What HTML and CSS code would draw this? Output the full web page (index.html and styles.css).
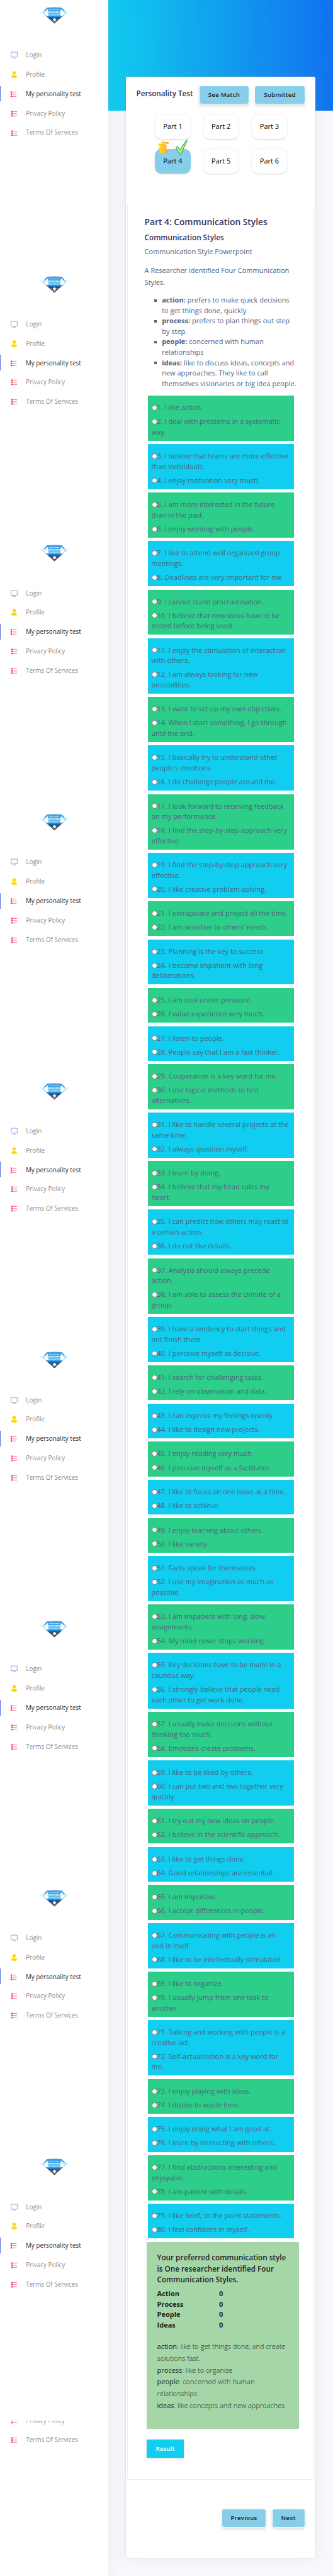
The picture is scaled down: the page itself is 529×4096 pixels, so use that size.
FILE: index.html
```html
<!DOCTYPE html>
<html lang="en">
<head>
<meta charset="utf-8">
<title>Personality Test</title>
<link rel="stylesheet" href="styles.css">
</head>
<body>
<svg class="defs" aria-hidden="true">
  <defs>
    <linearGradient id="gem-fill" x1="0" y1="0" x2="0" y2="1">
      <stop offset="0" stop-color="#4a9ad8"/><stop offset=".28" stop-color="#3fa9ee"/>
      <stop offset=".45" stop-color="#6fd0fa"/><stop offset=".58" stop-color="#1f86cf"/>
      <stop offset=".7" stop-color="#1d3f7c"/><stop offset=".85" stop-color="#5b5a68"/>
      <stop offset="1" stop-color="#3d5a40"/>
    </linearGradient>
    <linearGradient id="coin-fill" x1="0" y1="0" x2="1" y2="0">
      <stop offset="0" stop-color="#fbdc1c"/><stop offset="1" stop-color="#f9ab2e"/>
    </linearGradient>
    <symbol id="gem" viewBox="0 0 68 39">
      <path d="M17 1.5Q34 0 51 1.5L62 13.500 34 38.500 6 13.500Z" fill="url(#gem-fill)"/>
      <path d="M8.500 13.500 18.500 5.500 19.500 10.500 20.500 20.500 15 20.500Z" fill="#fff"/>
      <path d="M59.500 13.500 49.500 5.500 48 10.500 47.500 20.500 53 20.500Z" fill="#fff"/>
      <path d="M22 6.500h24M24 19h21" stroke="#e6f6ff" stroke-width="1.200" stroke-dasharray="2 1" fill="none"/>
      <path d="M1 11.800h66" stroke="#d5effa" stroke-width="3" stroke-dasharray="2.200 .8"/>
      <path d="M22 28.500h9M38 28.500h8M27 32.500h5M37 32.500h4" stroke="#d9b39b" stroke-width="1.200" stroke-dasharray="1 1"/>
      <path d="M30.500 29.500Q34 22.500 38 29.500L34.500 34Z" fill="#fff"/>
      <circle cx="34.300" cy="36" r="2" fill="#243b2b"/><circle cx="34.300" cy="35.600" r=".8" fill="#d8e8d8"/>
    </symbol>
    <symbol id="tv" viewBox="0 0 16 16">
      <path d="M1 1.500h14v11H1z" fill="none" stroke="#5e72e4" stroke-width="1"/>
      <path d="M4.500 14.700h7" stroke="#5e72e4" stroke-width="1"/>
    </symbol>
    <symbol id="user" viewBox="0 0 16 16">
      <circle cx="8" cy="4.300" r="3.900" fill="#ffd600"/>
      <path d="M1.500 13Q2 9.300 5.200 9.200Q8 10.800 10.800 9.200Q14 9.300 14.500 13Q14.500 15.500 12.500 15.500H3.500Q1.500 15.500 1.500 13Z" fill="#ffd600"/>
    </symbol>
    <symbol id="list" viewBox="0 0 16 16">
      <path d="M3 3.500h12M3 8.500h12M3 13.500h12" stroke="#f5365c" stroke-width="1"/>
      <path d="M3 3v11" stroke="#f5365c" stroke-width=".5"/>
      <circle cx="3" cy="3.500" r="1.800" fill="#f5365c"/><circle cx="3" cy="8.500" r="1.800" fill="#f5365c"/><circle cx="3" cy="13.500" r="1.800" fill="#f5365c"/>
    </symbol>
    <symbol id="coins" viewBox="0 0 26 30">
      <g fill="url(#coin-fill)">
        <rect x=".5" y="6.300" width="17" height="4.500" rx=".5"/><rect x="3.500" y="10.600" width="17" height="5" rx=".5"/>
        <rect x="1" y="15.500" width="17.500" height="4.600" rx=".5"/><rect x="5" y="20" width="17" height="4.700" rx=".5"/>
        <rect x="3.500" y="24.600" width="17.500" height="4.600" rx=".5"/>
        <path d="M8.500.5 25 3.500 24.300 7.800 7.800 4.500Z"/>
      </g>
    </symbol>
    <symbol id="check" viewBox="0 0 28 36">
      <path d="M24.500 1.800Q26.500.2 26.700 2L13.500 31.500Q10.500 37 8 31.500L1.500 20.500Q-.5 15 4 15.800Q7 17.500 10 22.800Z" fill="#a9ee8c" stroke="#15924a" stroke-width="1.300" stroke-linejoin="round"/>
    </symbol>
  </defs>
</svg>
<div class="page">
  <aside class="rail">
    <nav class="side"><svg class="logo"><use href="#gem"/></svg><ul class="menu">
      <li><svg class="ico"><use href="#tv"/></svg>Login</li><li><svg class="ico"><use href="#user"/></svg>Profile</li><li class="active"><svg class="ico"><use href="#list"/></svg>My personality test</li><li><svg class="ico"><use href="#list"/></svg>Privacy Policy</li><li><svg class="ico"><use href="#list"/></svg>Terms Of Services</li></ul></nav>
    <nav class="side"><svg class="logo"><use href="#gem"/></svg><ul class="menu">
      <li><svg class="ico"><use href="#tv"/></svg>Login</li><li><svg class="ico"><use href="#user"/></svg>Profile</li><li class="active"><svg class="ico"><use href="#list"/></svg>My personality test</li><li><svg class="ico"><use href="#list"/></svg>Privacy Policy</li><li><svg class="ico"><use href="#list"/></svg>Terms Of Services</li></ul></nav>
    <nav class="side"><svg class="logo"><use href="#gem"/></svg><ul class="menu">
      <li><svg class="ico"><use href="#tv"/></svg>Login</li><li><svg class="ico"><use href="#user"/></svg>Profile</li><li class="active"><svg class="ico"><use href="#list"/></svg>My personality test</li><li><svg class="ico"><use href="#list"/></svg>Privacy Policy</li><li><svg class="ico"><use href="#list"/></svg>Terms Of Services</li></ul></nav>
    <nav class="side"><svg class="logo"><use href="#gem"/></svg><ul class="menu">
      <li><svg class="ico"><use href="#tv"/></svg>Login</li><li><svg class="ico"><use href="#user"/></svg>Profile</li><li class="active"><svg class="ico"><use href="#list"/></svg>My personality test</li><li><svg class="ico"><use href="#list"/></svg>Privacy Policy</li><li><svg class="ico"><use href="#list"/></svg>Terms Of Services</li></ul></nav>
    <nav class="side"><svg class="logo"><use href="#gem"/></svg><ul class="menu">
      <li><svg class="ico"><use href="#tv"/></svg>Login</li><li><svg class="ico"><use href="#user"/></svg>Profile</li><li class="active"><svg class="ico"><use href="#list"/></svg>My personality test</li><li><svg class="ico"><use href="#list"/></svg>Privacy Policy</li><li><svg class="ico"><use href="#list"/></svg>Terms Of Services</li></ul></nav>
    <nav class="side"><svg class="logo"><use href="#gem"/></svg><ul class="menu">
      <li><svg class="ico"><use href="#tv"/></svg>Login</li><li><svg class="ico"><use href="#user"/></svg>Profile</li><li class="active"><svg class="ico"><use href="#list"/></svg>My personality test</li><li><svg class="ico"><use href="#list"/></svg>Privacy Policy</li><li><svg class="ico"><use href="#list"/></svg>Terms Of Services</li></ul></nav>
    <nav class="side"><svg class="logo"><use href="#gem"/></svg><ul class="menu">
      <li><svg class="ico"><use href="#tv"/></svg>Login</li><li><svg class="ico"><use href="#user"/></svg>Profile</li><li class="active"><svg class="ico"><use href="#list"/></svg>My personality test</li><li><svg class="ico"><use href="#list"/></svg>Privacy Policy</li><li><svg class="ico"><use href="#list"/></svg>Terms Of Services</li></ul></nav>
    <nav class="side"><svg class="logo"><use href="#gem"/></svg><ul class="menu">
      <li><svg class="ico"><use href="#tv"/></svg>Login</li><li><svg class="ico"><use href="#user"/></svg>Profile</li><li class="active"><svg class="ico"><use href="#list"/></svg>My personality test</li><li><svg class="ico"><use href="#list"/></svg>Privacy Policy</li><li><svg class="ico"><use href="#list"/></svg>Terms Of Services</li></ul></nav>
    <nav class="side"><svg class="logo"><use href="#gem"/></svg><ul class="menu">
      <li><svg class="ico"><use href="#tv"/></svg>Login</li><li><svg class="ico"><use href="#user"/></svg>Profile</li><li class="active"><svg class="ico"><use href="#list"/></svg>My personality test</li><li><svg class="ico"><use href="#list"/></svg>Privacy Policy</li><li><svg class="ico"><use href="#list"/></svg>Terms Of Services</li></ul></nav>
    <nav class="side side-tail"><ul class="menu menu-tail">
      <li><svg class="ico"><use href="#list"/></svg>Privacy Policy</li><li><svg class="ico"><use href="#list"/></svg>Terms Of Services</li></ul></nav>
  </aside>
  <main class="main">
    <section class="card">
      <header class="card-head">
        <h3>Personality Test</h3>
        <span class="btn">See Match</span>
        <span class="btn">Submitted</span>
      </header>
      <div class="parts">
        <span class="part">Part 1</span><span class="part">Part 2</span><span class="part">Part 3</span>
        <span class="part current">Part 4<svg class="coins"><use href="#coins"/></svg><svg class="check"><use href="#check"/></svg></span><span class="part">Part 5</span><span class="part">Part 6</span>
      </div>
      <div class="panel">
        <h2>Part 4: Communication Styles</h2>
        <h3 class="sub">Communication Styles</h3>
        <p class="lead">Communication Style Powerpoint</p>
        <p class="lead">A Researcher identified Four Communication<br>Styles.</p>
        <ul class="styles">
          <li><b>action:</b> prefers to make quick decisions<br>to get things done, quickly</li>
          <li><b>process:</b> prefers to plan things out step<br>by step.</li>
          <li><b>people:</b> concerned with human<br>relationships</li>
          <li><b>ideas:</b> like to discuss ideas, concepts and<br>new approaches. They like to call<br>themselves visionaries or big idea people.</li>
        </ul>
        <div class="questions">
          <div class="q"><p><i></i>1. I like action.</p><p><i></i>2. I deal with problems in a systematic<br>way.</p></div>
          <div class="q"><p><i></i>3. I believe that teams are more effective<br>than individuals.</p><p><i></i>4. I enjoy motivation very much.</p></div>
          <div class="q"><p><i></i>5. I am more interested in the future<br>than in the past.</p><p><i></i>6. I enjoy working with people.</p></div>
          <div class="q"><p><i></i>7. I like to attend well organized group<br>meetings.</p><p><i></i>8. Deadlines are very important for me</p></div>
          <div class="q"><p><i></i>9. I cannot stand procrastination.</p><p><i></i>10. I believe that new ideas have to be<br>tested before being used.</p></div>
          <div class="q"><p><i></i>11. I enjoy the stimulation of interaction<br>with others.</p><p><i></i>12. I am always looking for new<br>possibilities.</p></div>
          <div class="q"><p><i></i>13. I want to set up my own objectives.</p><p><i></i>14. When I start something, I go through<br>until the end.</p></div>
          <div class="q"><p><i></i>15. I basically try to understand other<br>people's emotions.</p><p><i></i>16. I do challenge people around me.</p></div>
          <div class="q"><p><i></i>17. I look forward to receiving feedback<br>on my performance.</p><p><i></i>18. I find the step-by-step approach very<br>effective.</p></div>
          <div class="q"><p><i></i>19. I find the step-by-step approach very<br>effective.</p><p><i></i>20. I like creative problem-solving.</p></div>
          <div class="q"><p><i></i>21. I extrapolate and project all the time.</p><p><i></i>22. I am sensitive to others' needs.</p></div>
          <div class="q"><p><i></i>23. Planning is the key to success.</p><p><i></i>24. I become impatient with long<br>deliberations.</p></div>
          <div class="q"><p><i></i>25. I am cool under pressure.</p><p><i></i>26. I value experience very much.</p></div>
          <div class="q"><p><i></i>27. I listen to people.</p><p><i></i>28. People say that I am a fast thinker.</p></div>
          <div class="q"><p><i></i>29. Cooperation is a key word for me.</p><p><i></i>30. I use logical methods to test<br>alternatives.</p></div>
          <div class="q"><p><i></i>31. I like to handle several projects at the<br>same time.</p><p><i></i>32. I always question myself.</p></div>
          <div class="q"><p><i></i>33. I learn by doing.</p><p><i></i>34. I believe that my head rules my<br>heart.</p></div>
          <div class="q"><p><i></i>35. I can predict how others may react to<br>a certain action.</p><p><i></i>36. I do not like details.</p></div>
          <div class="q"><p><i></i>37. Analysis should always precede<br>action.</p><p><i></i>38. I am able to assess the climate of a<br>group.</p></div>
          <div class="q"><p><i></i>39. I have a tendency to start things and<br>not finish them.</p><p><i></i>40. I perceive myself as decisive.</p></div>
          <div class="q"><p><i></i>41. I search for challenging tasks.</p><p><i></i>42. I rely on observation and data.</p></div>
          <div class="q"><p><i></i>43. I can express my feelings openly.</p><p><i></i>44. I like to design new projects.</p></div>
          <div class="q"><p><i></i>45. I enjoy reading very much.</p><p><i></i>46. I perceive myself as a facilitator.</p></div>
          <div class="q"><p><i></i>47. I like to focus on one issue at a time.</p><p><i></i>48. I like to achieve.</p></div>
          <div class="q"><p><i></i>49. I enjoy learning about others.</p><p><i></i>50. I like variety.</p></div>
          <div class="q"><p><i></i>51. Facts speak for themselves.</p><p><i></i>52. I use my imagination as much as<br>possible.</p></div>
          <div class="q"><p><i></i>53. I am impatient with long, slow<br>assignments.</p><p><i></i>54. My mind never stops working.</p></div>
          <div class="q"><p><i></i>55. Key decisions have to be made in a<br>cautious way.</p><p><i></i>56. I strongly believe that people need<br>each other to get work done.</p></div>
          <div class="q"><p><i></i>57. I usually make decisions without<br>thinking too much.</p><p><i></i>58. Emotions create problems.</p></div>
          <div class="q"><p><i></i>59. I like to be liked by others.</p><p><i></i>60. I can put two and two together very<br>quickly.</p></div>
          <div class="q"><p><i></i>61. I try out my new ideas on people.</p><p><i></i>62. I believe in the scientific approach.</p></div>
          <div class="q"><p><i></i>63. I like to get things done.</p><p><i></i>64. Good relationships are essential.</p></div>
          <div class="q"><p><i></i>65. I am impulsive.</p><p><i></i>66. I accept differences in people.</p></div>
          <div class="q"><p><i></i>67. Communicating with people is an<br>end in itself.</p><p><i></i>68. I like to be intellectually stimulated</p></div>
          <div class="q"><p><i></i>69. I like to organize.</p><p><i></i>70. I usually jump from one task to<br>another.</p></div>
          <div class="q"><p><i></i>71. Talking and working with people is a<br>creative act.</p><p><i></i>72. Self-actualization is a key word for<br>me.</p></div>
          <div class="q"><p><i></i>73. I enjoy playing with ideas.</p><p><i></i>74. I dislike to waste time.</p></div>
          <div class="q"><p><i></i>75. I enjoy doing what I am good at.</p><p><i></i>76. I learn by interacting with others.</p></div>
          <div class="q"><p><i></i>77. I find abstractions interesting and<br>enjoyable.</p><p><i></i>78. I am patient with details.</p></div>
          <div class="q"><p><i></i>79. I like brief, to the point statements.</p><p><i></i>80. I feel confident in myself.</p></div>
        </div>
        <div class="result">
          <h3>Your preferred communication style<br>is One researcher identified Four<br>Communication Styles.</h3>
          <dl>
            <dt>Action</dt><dd>0</dd><dt>Process</dt><dd>0</dd><dt>People</dt><dd>0</dd><dt>Ideas</dt><dd>0</dd>
          </dl>
          <p><span>action</span>: like to get things done, and create<br>solutions fast.<br><span>process</span>: like to organize<br><span>people</span>: concerned with human<br>relationships<br><span>ideas</span>: like concepts and new approaches</p>
        </div>
        <span class="btn btn-result">Result</span>
      </div>
      <footer class="card-foot">
        <span class="btn">Previous</span>
        <span class="btn">Next</span>
      </footer>
    </section>
  </main>
</div>
</body>
</html>
```
FILE: styles.css
```css
html, body { margin: 0; padding: 0; height: 4096px; overflow: hidden; background: #f8f9fe; }
* { box-sizing: border-box; }
h2, h3, p, ul, dl, dt, dd { margin: 0; padding: 0; }
ul { list-style: none; }
.defs { position: absolute; width: 0; height: 0; }

.page {
  zoom: 0.6887;
  display: grid;
  grid-template-columns: 250px 518.5px;
  width: 768.5px;
  height: 5948px;
  font-family: "Open Sans", "Noto Sans", sans-serif;
  font-size: 16px;
  line-height: 24px;
  color: #525f7f;
  white-space: nowrap;
}

/* Sidebar */
.rail { position: relative; z-index: 1; background: #fff; box-shadow: 0 0 32px rgba(136, 152, 170, .15); }
.side { height: 621px; padding-top: 16px; overflow: hidden; }
.logo { display: block; width: 68px; height: 39px; margin: 0 auto 52.500px 92px; }
.menu { padding-top: 1.500px; }
.menu li {
  display: flex;
  align-items: center;
  height: 36px;
  margin-bottom: 8.800px;
  padding-left: 24px;
  gap: 20px;
  font-size: 14.400px;
  color: rgba(0, 0, 0, .5);
}
.menu .active { color: rgba(0, 0, 0, .9); border-left: 2px solid #5e72e4; padding-left: 22px; }
.ico { width: 16px; height: 16px; margin-top: 1px; }
.side-tail { height: 359px; padding-top: 0; }
.menu-tail { padding-top: 0; margin-top: -19px; }

/* Main column */
.main {
  padding: 176px 0 0 39px;
  background: linear-gradient(87deg, #11cdef 0, #1171ef 100%) 0 0 / 100% 256px no-repeat, #f8f9fe;
}
.card {
  display: flex;
  flex-direction: column;
  width: 440px;
  height: 5730.500px;
  padding: 0 4px;
  background: #fff;
  background-clip: padding-box;
  border: 1px solid rgba(0, 0, 0, .05);
  border-radius: 6px;
  box-shadow: 0 0 32px rgba(136, 152, 170, .15);
}
.card h2, .card h3 { color: #32325d; font-weight: 600; }
.card h3 { font-size: 17px; }
.card-head { display: flex; align-items: flex-start; padding: 20px 20px 0; height: 87px; }
.card-head h3 { flex: 1; line-height: 25.500px; padding-top: 6px; }
.btn {
  padding: 9px 20px;
  border: 1px solid #fff;
  border-radius: 6px;
  background: #87ceeb;
  color: #212529;
  font-size: 14px;
  font-weight: 600;
  line-height: 23px;
  letter-spacing: .35px;
  box-shadow: 0 4px 6px rgba(50, 50, 93, .11), 0 1px 3px rgba(0, 0, 0, .08);
}
.card-head .btn { margin-left: 12.500px; }
.card-head .btn:first-of-type { margin-left: 0; }

.parts {
  display: grid;
  grid-template-columns: repeat(3, 82px);
  grid-auto-rows: 56px;
  column-gap: 29.500px;
  row-gap: 24px;
  padding-left: 63px;
  height: 208px;
}
.part {
  position: relative;
  display: flex;
  align-items: center;
  justify-content: center;
  border-radius: 15px;
  color: #000;
  background: #fff;
  box-shadow: 0 1px 3px rgba(0, 0, 0, .18);
}
.part.current { background: #87ceeb; }
.coins { position: absolute; left: 7px; top: -19px; width: 26px; height: 30px; }
.check { position: absolute; left: 47px; top: -22px; width: 28px; height: 36px; }

.panel {
  height: 5252px;
  padding: 25px 39px 0;
  box-shadow: 0 1px 3px rgba(0, 0, 0, .22);
}
.panel h2 { font-size: 20px; line-height: 30px; }
.panel .sub { line-height: 25.500px; margin-top: 8px; }
.lead { line-height: 27.200px; margin: 7.500px 0 16px; }
.lead + .lead { margin: 16px 0 0; }
.styles { margin: 15.500px 0 16px 40px; }
.styles li { position: relative; }
.styles li::before {
  content: "";
  position: absolute;
  left: -18px;
  top: 9px;
  width: 6px;
  height: 6px;
  background: #525f7f;
}
.styles b { font-weight: 700; }

.questions { display: grid; gap: 8px; width: 336px; margin-left: 8px; }
.q { padding: 16px 8px 8px; background: #11cdef; }
.q:nth-child(odd) { background: #2dce89; }
.q p + p { margin-top: 8px; }
.q i {
  display: inline-block;
  width: 13px;
  height: 13px;
  vertical-align: -1px;
  border: 1px solid #767676;
  border-radius: 50%;
  background: #fff;
}

.result { width: 352px; height: 432px; margin: 8px 0 24px 5px; padding: 24px; background: #a5d6a7; }
.result .h, .panel .result h3 { color: #212529; line-height: 25.500px; }
.result dl { display: grid; grid-template-columns: 143px 1fr; margin: 8px 0 24px; color: #212529; font-weight: 700; line-height: 24px; }
.result p { font-weight: 300; line-height: 27.200px; color: #212529; }
.result p span { font-weight: 400; }
.btn-result { display: inline-block; margin-left: 5px; padding: 10px 21px; border: 0; border-radius: 0; background: #11cdef; color: #fff; }
.card-foot { display: flex; justify-content: flex-end; gap: 12.500px; padding: 67.500px 20px 0; }
```
